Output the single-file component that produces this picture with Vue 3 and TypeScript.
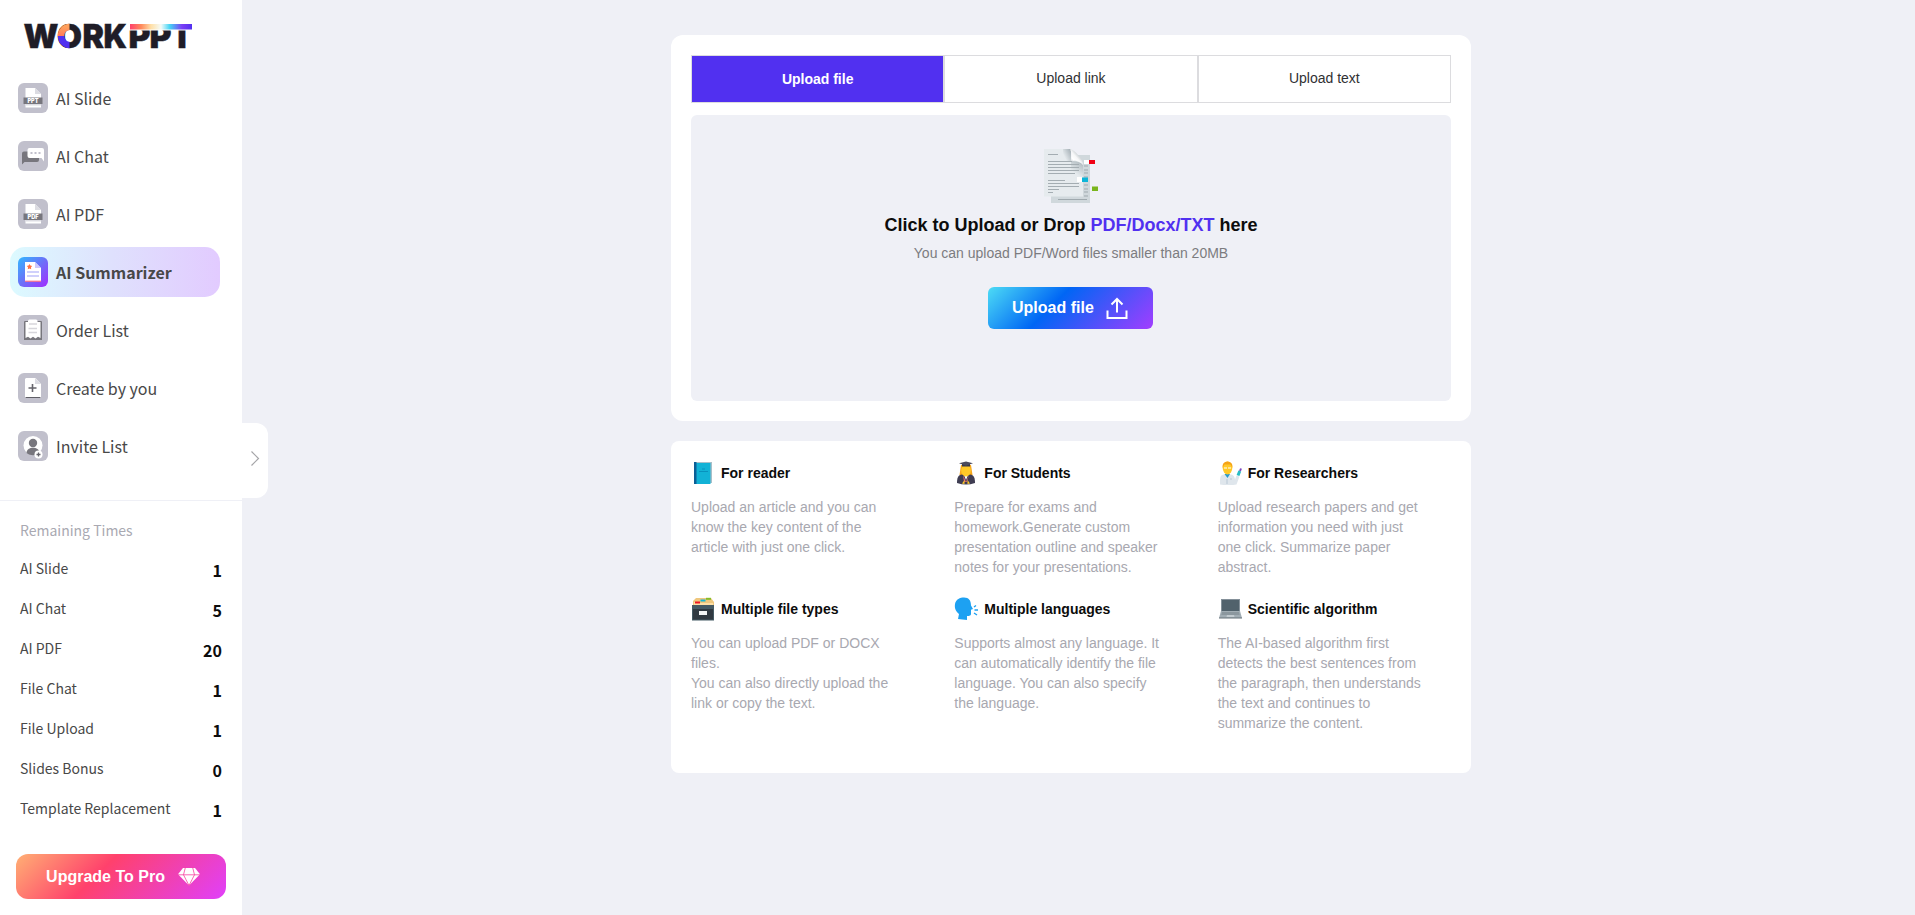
<script setup lang="ts">
import { ref } from 'vue'

interface NavItem { icon: string; label: string }
interface Quota { label: string; count: number }
interface Feature { icon: string; title: string; text: string }

const active = ref('AI Summarizer')
const tab = ref('Upload file')
const tabs: string[] = ['Upload file', 'Upload link', 'Upload text']

const nav: NavItem[] = [
  { icon: 'ppt', label: 'AI Slide' },
  { icon: 'chat', label: 'AI Chat' },
  { icon: 'pdf', label: 'AI PDF' },
  { icon: 'summary', label: 'AI Summarizer' },
  { icon: 'order', label: 'Order List' },
  { icon: 'create', label: 'Create by you' },
  { icon: 'invite', label: 'Invite List' },
]

const quotas: Quota[] = [
  { label: 'AI Slide', count: 1 },
  { label: 'AI Chat', count: 5 },
  { label: 'AI PDF', count: 20 },
  { label: 'File Chat', count: 1 },
  { label: 'File Upload', count: 1 },
  { label: 'Slides Bonus', count: 0 },
  { label: 'Template Replacement', count: 1 },
]

const features: Feature[] = [
  { icon: 'book', title: 'For reader', text: 'Upload an article and you can know the key content of the article with just one click.' },
  { icon: 'student', title: 'For Students', text: 'Prepare for exams and homework.Generate custom presentation outline and speaker notes for your presentations.' },
  { icon: 'scientist', title: 'For Researchers', text: 'Upload research papers and get information you need with just one click. Summarize paper abstract.' },
  { icon: 'files', title: 'Multiple file types', text: 'You can upload PDF or DOCX files.\nYou can also directly upload the link or copy the text.' },
  { icon: 'speak', title: 'Multiple languages', text: 'Supports almost any language. It can automatically identify the file language. You can also specify the language.' },
  { icon: 'laptop', title: 'Scientific algorithm', text: 'The AI-based algorithm first detects the best sentences from the paragraph, then understands the text and continues to summarize the content.' },
]
</script>

<template>
  <div class="page">
    <aside class="sidebar">
      <svg class="logo" width="180" height="46" viewBox="-5 -10 180 46">
        <defs>
          <linearGradient id="logo-bar">
            <stop offset="0" stop-color="#ff416c" />
            <stop offset=".18" stop-color="#ff8a5c" />
            <stop offset=".34" stop-color="#ffe0a8" />
            <stop offset=".5" stop-color="#f4fbf8" />
            <stop offset=".64" stop-color="#45d4f5" />
            <stop offset=".84" stop-color="#7a3df5" />
            <stop offset="1" stop-color="#5130f0" />
          </linearGradient>
          <linearGradient id="logo-o" x1="0" y1="1" x2="0" y2="0">
            <stop offset="0" stop-color="#ff7a59" />
            <stop offset="1" stop-color="#ffa05c" />
          </linearGradient>
        </defs>
        <g class="logo-text">
          <text x="-.500" y="25" textLength="35" lengthAdjust="spacingAndGlyphs">W</text>
          <text x="33" y="25" textLength="25" lengthAdjust="spacingAndGlyphs">O</text>
          <text x="58.500" y="25" textLength="21.500" lengthAdjust="spacingAndGlyphs">R</text>
          <text x="79.500" y="25" textLength="23.500" lengthAdjust="spacingAndGlyphs">K</text>
          <text x="104.500" y="25" textLength="22" lengthAdjust="spacingAndGlyphs">P</text>
          <text x="125.500" y="25" textLength="22" lengthAdjust="spacingAndGlyphs">P</text>
          <text x="147" y="25" textLength="22" lengthAdjust="spacingAndGlyphs">T</text>
        </g>
        <path d="M45.500 4A8.500 9 0 0 0 37 13" fill="none" stroke="url(#logo-o)" stroke-width="6.500" />
        <path d="M37 13A8.500 9 0 0 0 45.500 22" fill="none" stroke="#5130f0" stroke-width="6.500" />
        <rect x="104" y="0" width="66" height="7.500" fill="#fff" />
        <rect x="106" y="1" width="62" height="5.500" fill="url(#logo-bar)" />
      </svg>

      <nav class="nav">
        <a v-for="item in nav" :key="item.label" class="nav-item" :class="{ active: active === item.label }" @click="active = item.label">
          <svg class="nav-icon" width="30" height="30" viewBox="0 0 30 30">
            <defs>
              <linearGradient id="nav-active" x1="0" y1="0" x2="1" y2="1">
                <stop offset="0" stop-color="#32b8ff" />
                <stop offset=".5" stop-color="#6c70f8" />
                <stop offset="1" stop-color="#a22cff" />
              </linearGradient>
            </defs>
            <rect width="30" height="30" rx="6" :fill="item.icon === 'summary' ? 'url(#nav-active)' : '#c1c0cc'" />
            <g v-if="item.icon === 'ppt' || item.icon === 'pdf'">
              <path d="M8 5h9l6 6v13.500H7.500V5.500z" fill="#fff" />
              <path d="M17 5l6 6h-6z" fill="#dcdce2" />
              <path d="M7.500 21h15.500v1.500H7.500z" fill="#dcdce2" />
              <path d="M5.500 14.500h19v6.500h-19z" fill="#77767d" />
              <text class="badge" x="15" y="20" text-anchor="middle" textLength="11" lengthAdjust="spacingAndGlyphs">{{ item.icon === 'ppt' ? 'PPT' : 'PDF' }}</text>
            </g>
            <g v-else-if="item.icon === 'chat'">
              <path d="M6 10.500h13a2 2 0 0 1 2 2V19a2 2 0 0 1-2 2H6.500L4 23.500V12.500a2 2 0 0 1 2-2z" fill="#77767d" />
              <path d="M11.500 7H24a2 2 0 0 1 2 2v11.500L23.500 17h-12a2 2 0 0 1-2-2V9a2 2 0 0 1 2-2z" fill="#fff" />
              <g fill="#c1c0cc"><rect x="12.500" y="11" width="2" height="2" /><rect x="16.500" y="11" width="2" height="2" /><rect x="20.500" y="11" width="2" height="2" /></g>
            </g>
            <g v-else-if="item.icon === 'summary'">
              <path d="M7 5h10l6 6v13.500H7z" fill="#fff" />
              <path d="M17 5l6 6h-6z" fill="#cfc8fb" />
              <path d="M7 24.200h16" stroke="#ff5a70" stroke-width="1" />
              <path d="M9 15h12M9 19h12" stroke="#cfd0fb" stroke-width="2" />
              <path d="M11.500 7l.9 1.600 1.800.3-1.200 1.400.2 1.900-1.700-.8-1.700.8.2-1.900-1.200-1.400 1.800-.3z" fill="#ff7043" />
            </g>
            <g v-else-if="item.icon === 'order'">
              <path d="M6 7a1 1 0 0 1 1-1h16a1 1 0 0 1 1 1v18H6z" fill="#77767d" />
              <path d="M7.500 7h15v16l-2.500-1.200-2.500 1.600-2.500-1.600-2.500 1.600-2.500-1.600-2.500 1.200z" fill="#fff" />
              <rect x="10" y="4.500" width="9.500" height="4.500" rx="1.500" fill="#fff" />
              <path d="M11 9h8M10.500 13.500h8.500M10.500 17.500h8.500" stroke="#d7d6dc" stroke-width="1.600" />
            </g>
            <g v-else-if="item.icon === 'create'">
              <path d="M8 5h9.500l5.500 6v14H7V6z" fill="#fff" />
              <path d="M17 5l6 6h-6z" fill="#dcdce2" />
              <path d="M7.500 24.500h15" stroke="#5f5e66" stroke-width="1" />
              <path d="M14.500 11v8M10.500 15h8" stroke="#65646b" stroke-width="1.600" />
            </g>
            <g v-else>
              <circle cx="15" cy="14.500" r="9.500" fill="#fff" />
              <circle cx="15" cy="12" r="4.200" fill="#77767d" />
              <path d="M8.500 22c0-7 13-7 13 0-4 3-9 3-13 0z" fill="#77767d" />
              <circle cx="20.500" cy="23.500" r="4" fill="#fff" />
              <path d="M20.500 21.500v4M18.500 23.500h4" stroke="#65646b" stroke-width="1.300" />
            </g>
          </svg>
          <span>{{ item.label }}</span>
        </a>
      </nav>

      <button class="collapse" aria-label="Toggle sidebar">
        <svg width="10" height="17" viewBox="0 0 10 17"><path d="M1.500 1.500l7 7-7 7" fill="none" stroke="#a5a5a8" stroke-width="1.200" /></svg>
      </button>

      <section class="remaining">
        <h2>Remaining Times</h2>
        <div v-for="q in quotas" :key="q.label" class="quota">
          <span>{{ q.label }}</span><b>{{ q.count }}</b>
        </div>
      </section>

      <button class="upgrade">
        <span>Upgrade To Pro</span>
        <svg width="22" height="19" viewBox="0 0 22 19">
          <path d="M5 1h12L22 7.200 11 18.500 0 7.200z" fill="#fff" />
          <path d="M0 7.800h22M7.500 0L5.500 7.800 11 18.500 16.500 7.800 14.500 0" fill="none" stroke="#f840a0" stroke-width=".8" />
        </svg>
      </button>
    </aside>

    <main class="main">
      <section class="card upload-card">
        <div class="tabs">
          <button v-for="t in tabs" :key="t" class="tab" :class="{ selected: tab === t }" @click="tab = t">{{ t }}</button>
        </div>
        <div class="drop">
          <svg class="doc" width="56" height="56" viewBox="0 0 56 56">
            <defs>
              <linearGradient id="curl" gradientUnits="userSpaceOnUse" x1="28" y1="13" x2="35" y2="7">
                <stop offset="0" stop-color="#d9dddf" /><stop offset=".3" stop-color="#fff" /><stop offset=".7" stop-color="#f6f7f8" /><stop offset="1" stop-color="#d3d8da" />
              </linearGradient>
              <linearGradient id="sheet" gradientUnits="userSpaceOnUse" x1="21" y1="8" x2="29" y2="4">
                <stop offset="0" stop-color="#e6ebee" /><stop offset="1" stop-color="#a3aeb4" />
              </linearGradient>
              <linearGradient id="sheet-edge" gradientUnits="userSpaceOnUse" x1="33" y1="26" x2="40" y2="16">
                <stop offset="0" stop-color="#e6ebee" /><stop offset="1" stop-color="#b2bcc1" />
              </linearGradient>
            </defs>
            <path d="M31 7h16v48H8V45h23z" fill="#d0d8dc" />
            <path d="M41 18h4M41 22h4M41 25h4M41 29h4M41 37h4M41 41h4M41 44h4M41 48h4M15 51.500h29" stroke="#9fa9ae" stroke-width="1" />
            <path d="M1 1h27v12l12 2v33.500H1z" fill="#e6ebee" />
            <path d="M20 1h8v12h-8z" fill="url(#sheet)" />
            <path d="M28 12.500l12 2.500v14H28z" fill="url(#sheet-edge)" />
            <path d="M27 1q4 1 8 6 5 5 5 10-4-5-12-4.500Q29.500 6 27 1z" fill="url(#curl)" />
            <path d="M5 6.500h10M5 13.500h24M5 16.500h31M5 19.500h31M5 22.500h31M5 25.500h27M5 32.500h17M5 35.500h31M5 38.500h31M5 41.500h11M5 44.500h5" stroke="#a4adb2" stroke-width="1" />
            <path d="M41 12h5v4h-5zM34 29h5v5h-5z" fill="#fff" />
            <path d="M46 12h6v4h-6z" fill="#f00014" />
            <path d="M39 29.500h6v4.500h-6z" fill="#0db5d8" />
            <path d="M49 38.500h6v4.500h-6z" fill="#7ab51d" />
          </svg>
          <h1>Click to Upload or Drop <em>PDF/Docx/TXT</em> here</h1>
          <p>You can upload PDF/Word files smaller than 20MB</p>
          <button class="upload">
            <span>Upload file</span>
            <svg width="22" height="23" viewBox="0 0 22 23" fill="none" stroke="#fff" stroke-width="2">
              <path d="M1.500 13.500V21h19v-7.500M11 15.500V2M5.500 7.500L11 2l5.500 5.500" />
            </svg>
          </button>
        </div>
      </section>

      <section class="card features">
        <article v-for="f in features" :key="f.title" class="feature">
          <h3>
            <svg width="24" height="24" viewBox="0 0 24 24">
              <g v-if="f.icon === 'book'">
                <path d="M3 1h18v21H3z" fill="#a9bfc9" />
                <path d="M3 2h16.500v21H3z" fill="#12b2d6" />
                <path d="M3 1h2.500v22H3z" fill="#0b5f96" />
                <path d="M8 10.500h9M11 8h3" stroke="#0892bd" stroke-width="1" />
              </g>
              <g v-else-if="f.icon === 'student'">
                <path d="M7 4h10l1.500 10h-13z" fill="#f6a51c" />
                <path d="M3 22c0-5 1-8 5-8.500h8c4 .5 5 3.500 5 8.500q-9 3-18 0z" fill="#3f3d52" />
                <path d="M10 14l2 5 2-5z" fill="#fff" />
                <path d="M9 14l3 7h-2zM15 14l-2 7h-1z" fill="#df6870" />
                <ellipse cx="12" cy="9.500" rx="4.800" ry="6" fill="#ffc928" />
                <path d="M8 3h8v2.500H8z" fill="#37374a" />
                <path d="M5 2.200L12 .500l7 1.700-7 2.500z" fill="#4c4b5d" />
                <path d="M8 22.500l2.500-3.500v4zM16 22.500l-2.500-3.500v4z" fill="#ffc928" />
              </g>
              <g v-else-if="f.icon === 'scientist'">
                <path d="M2 23.500c0-7 0-9.500 4-10h7c3 .5 3.500 2.500 4 5l1.500-4 3 1-3 8q-8 1.500-16.500 0z" fill="#dfe6ec" />
                <path d="M6.500 13h5.500L9.500 17z" fill="#2699cd" />
                <ellipse cx="9.500" cy="7" rx="4.800" ry="6.500" fill="#ffc928" />
                <path d="M4.500 7Q4 .500 9.500 .500T14.500 7l-2-3.500h-6z" fill="#f5a317" />
                <path d="M6 7h3M10 7h3" stroke="#fff" stroke-width="1.200" />
                <path d="M9 18v5M12 18h2" stroke="#b9c8d5" />
                <path d="M20 14.500l1.800-4.500" stroke="#27bcc4" stroke-width="3" />
                <path d="M22 10l1-2.500" stroke="#7b45bf" stroke-width="2" />
              </g>
              <g v-else-if="f.icon === 'files'">
                <path d="M2 4l3-3h15l3 4v5H2z" fill="#efc77e" />
                <path d="M3 5h5l1 1h13v3H3z" fill="#ffe0a5" />
                <path d="M4 4.500h5v2H4z" fill="#ee1725" /><path d="M9.500 2.500h5v2h-5z" fill="#19b6cf" /><path d="M15 .800h5v2h-5z" fill="#85bd28" />
                <path d="M1 8h22v15.500H1z" fill="#455a64" />
                <path d="M2 12h20v10.500H2z" fill="#303941" />
                <path d="M8 14h8v4H8z" fill="#f3f5f6" />
              </g>
              <g v-else-if="f.icon === 'speak'">
                <path d="M4 22l1-5C1 14 .500 10 1 7c1-5 5-6.500 9-6.500 5 0 7 3 7 8l2 3.500-2 .8v4.200q0 2-4 2v4z" fill="#1da1f2" />
                <path d="M20 10l2-1.500M20.500 13h3.500M20 16l3 2" stroke="#1da1f2" stroke-width="1.400" />
              </g>
              <g v-else>
                <path d="M3 2h19v13H3z" fill="#849099" />
                <path d="M4 3h17v11H4z" fill="#51626c" />
                <path d="M3 14h19l2 7H1z" fill="#a1adb4" />
                <path d="M4 15h17l.7 3H3.300z" fill="#8b979e" />
                <path d="M9 18h7l.5 2h-8z" fill="#c2cbd0" />
                <path d="M1 21h23" stroke="#66737a" />
              </g>
            </svg>
            {{ f.title }}
          </h3>
          <p>{{ f.text }}</p>
        </article>
      </section>
    </main>
  </div>
</template>

<style>
body { margin: 0; background: #eff0f6; }
</style>

<style scoped>
* { box-sizing: border-box; }
.page { display: flex; height: 915px; overflow: hidden; background: #eff0f6; font-family: "Liberation Sans", Arial, sans-serif; font-size: 14px; color: #0c0c0c; }
button { border: 0; padding: 0; font-family: inherit; cursor: pointer; }
.sidebar { position: relative; width: 242px; flex: none; height: 915px; background: #fff; font-family: "Noto Sans CJK SC", sans-serif; color: #484848; }
.logo { display: block; margin: 0 0 0 19px; transform: translateY(13px); }
.logo-text { font: 900 33px Inter, sans-serif; fill: #1f1d27; stroke: #1f1d27; stroke-width: .4px; }
.badge { font: 900 5.5px Inter, sans-serif; fill: #fff; }
.nav { display: flex; flex-direction: column; gap: 8px; padding: 27px 22px 0 10px; }
.nav-item { display: flex; align-items: center; gap: 8px; height: 50px; padding-left: 8px; border-radius: 15px; font-size: 16px; cursor: pointer; }
.nav-item span { line-height: 24px; padding-bottom: 1px; }
.active { background: linear-gradient(90deg, #dcfaff, #dfe1fd 48%, #e2cbff); font-weight: 700; }
.collapse { position: absolute; left: 242px; top: 422.5px; width: 26px; height: 75px; background: #fff; border-radius: 0 12px 12px 0; display: flex; align-items: center; justify-content: center; padding-bottom: 3px; }
.remaining { margin-top: 29px; border-top: 1px solid #eff0f6; padding: 19px 20px 0; }
.remaining h2 { margin: 0 0 9px; font-size: 14px; font-weight: 400; line-height: 20px; color: #a9a9b2; }
.quota { display: flex; justify-content: space-between; height: 40px; line-height: 38px; font-size: 14px; }
.quota b { font-size: 16px; line-height: 42px; color: #0c0c0c; }
.upgrade { display: flex; align-items: center; justify-content: center; gap: 13px; width: 210px; height: 45px; padding-left: 4px; margin: 25px 0 0 16px; border-radius: 12px; background: linear-gradient(135deg, #ffb074, #ff416c 40%, #e040fb); color: #fff; font: bold 16px "Liberation Sans", Arial, sans-serif; }
.main { flex: 1; padding: 35px 0 0 429px; }
.card { width: 800px; background: #fff; }
.upload-card { height: 386px; padding: 20px; border-radius: 12px; }
.tabs { display: grid; grid-template-columns: repeat(3, 1fr); height: 48px; }
.tab { border: 1px solid #dcdcdf; background: #fff; font-size: 14px; color: #303133; padding-bottom: 2px; }
.tab.selected { background: #5130f0; color: #fff; font-weight: 700; padding: 0; }
.drop { height: 286px; margin-top: 12px; padding-top: 33px; background: #eff0f6; border-radius: 6px; display: flex; flex-direction: column; align-items: center; }
.doc { display: block; }
h1 { margin: 10px 0 0; font-size: 18px; line-height: 22px; font-weight: 700; }
h1 em { font-style: normal; color: #5130f0; }
.drop p { margin: 9px 0 0; line-height: 16px; color: #7c7c80; }
.upload { display: flex; align-items: center; gap: 12px; width: 165px; height: 42px; margin: 26px 1px 0 0; padding-left: 24px; border-radius: 6px; background: linear-gradient(135deg, #4ddcf5, #0066f5 40%, #a23dff); color: #fff; font-size: 16px; font-weight: 700; }
.features { height: 332px; margin-top: 20px; padding: 20px; border-radius: 8px; display: grid; grid-template-columns: repeat(3, 253.33px); column-gap: 10px; grid-template-rows: 136px 1fr; }
h3 { display: flex; align-items: center; gap: 6px; height: 24px; margin: 0; font-size: 14px; font-weight: 700; }
.feature p { width: 207px; margin: 12px 0 0; line-height: 20px; white-space: pre-line; color: #a8a8b0; }
</style>
